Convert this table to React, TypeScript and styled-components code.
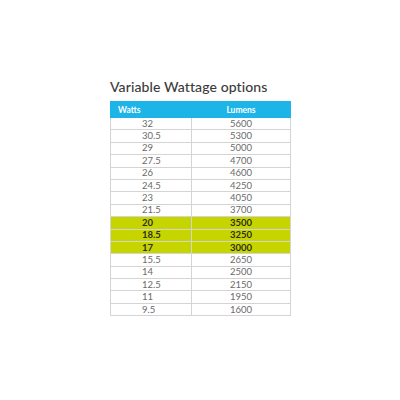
import styled, { createGlobalStyle } from "styled-components";

const GlobalStyle = createGlobalStyle`
  html, body {
    margin: 0;
    background: #ffffff;
  }
`;

const Page = styled.div`
  width: 400px;
  height: 400px;
  display: flex;
  flex-direction: column;
  align-items: flex-start;
  padding: 79px 0 0 110px;
  box-sizing: border-box;
  font-family: Lato, "Open Sans", sans-serif;
`;

const Title = styled.h2`
  margin: 0 0 6px;
  font-size: 14px;
  font-weight: 500;
  color: #3b3b3b;
  letter-spacing: 0.1px;
  line-height: 16px;
`;

const Table = styled.table`
  width: 181px;
  border-collapse: collapse;
  font-size: 9.5px;
`;

const HeadCell = styled.th<{ $left?: boolean }>`
  background: #1db4e8;
  color: #ffffff;
  font-weight: 700;
  font-size: 8.5px;
  height: 15px;
  padding: 0 0 0 ${(p) => (p.$left ? "7px" : "0")};
  text-align: ${(p) => (p.$left ? "left" : "center")};
  border: 1px solid #1db4e8;
`;

const Row = styled.tr<{ $hot?: boolean }>`
  height: 12.4px;
  background: ${(p) => (p.$hot ? "#c6d400" : "#ffffff")};
  color: ${(p) => (p.$hot ? "#2e2e1a" : "#6a6a6a")};
  font-weight: ${(p) => (p.$hot ? 700 : 400)};
`;

const Cell = styled.td<{ $left?: boolean }>`
  padding: 0 0 0 ${(p) => (p.$left ? "31px" : "0")};
  text-align: ${(p) => (p.$left ? "left" : "center")};
  border: 1px solid #d4d4d4;
  line-height: 10px;
  width: ${(p) => (p.$left ? "49px" : "auto")};
`;

const rows: [string, string][] = [
  ["32", "5600"],
  ["30.5", "5300"],
  ["29", "5000"],
  ["27.5", "4700"],
  ["26", "4600"],
  ["24.5", "4250"],
  ["23", "4050"],
  ["21.5", "3700"],
  ["20", "3500"],
  ["18.5", "3250"],
  ["17", "3000"],
  ["15.5", "2650"],
  ["14", "2500"],
  ["12.5", "2150"],
  ["11", "1950"],
  ["9.5", "1600"],
];

const hot = ["20", "18.5", "17"];

export default function App() {
  return (
    <>
      <GlobalStyle />
      <Page>
        <Title>Variable Wattage options</Title>
        <Table>
          <thead>
            <tr>
              <HeadCell $left>Watts</HeadCell>
              <HeadCell>Lumens</HeadCell>
            </tr>
          </thead>
          <tbody>
            {rows.map(([w, l]) => (
              <Row key={w} $hot={hot.includes(w)}>
                <Cell $left>{w}</Cell>
                <Cell>{l}</Cell>
              </Row>
            ))}
          </tbody>
        </Table>
      </Page>
    </>
  );
}
